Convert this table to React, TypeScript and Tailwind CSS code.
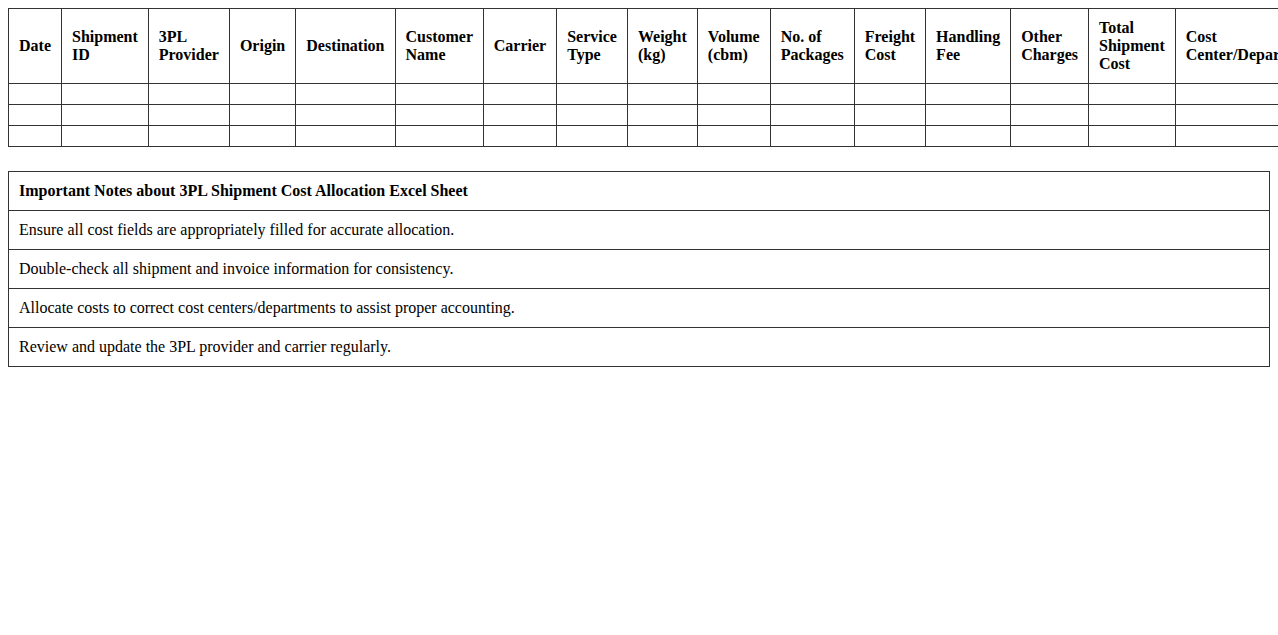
import React from 'react';

const columns = [
  'Date',
  'Shipment ID',
  '3PL Provider',
  'Origin',
  'Destination',
  'Customer Name',
  'Carrier',
  'Service Type',
  'Weight (kg)',
  'Volume (cbm)',
  'No. of Packages',
  'Freight Cost',
  'Handling Fee',
  'Other Charges',
  'Total Shipment Cost',
  'Cost Center/Department',
  'Invoice Number',
  'Remarks',
];

const notes = [
  'Ensure all cost fields are appropriately filled for accurate allocation.',
  'Double-check all shipment and invoice information for consistency.',
  'Allocate costs to correct cost centers/departments to assist proper accounting.',
  'Review and update the 3PL provider and carrier regularly.',
];

const cell = 'border border-[#333] p-[10px] text-left align-middle';

export default function App() {
  return (
    <div className="min-h-screen bg-white p-2 text-black text-[16px] leading-[18px] font-['Liberation_Serif','Times_New_Roman',serif]">
      {/* Cost allocation sheet */}
      <table className="w-full border-collapse">
        <thead>
          <tr>
            {columns.map((col) => (
              <th key={col} className={`${cell} font-bold`}>
                {col}
              </th>
            ))}
          </tr>
        </thead>
        <tbody>
          {[0, 1, 2].map((row) => (
            <tr key={row}>
              {columns.map((col) => (
                <td key={col} className={`${cell} h-[21px]`}></td>
              ))}
            </tr>
          ))}
        </tbody>
      </table>

      {/* Notes */}
      <table className="mt-6 w-full border-collapse">
        <thead>
          <tr>
            <th className={`${cell} font-bold`}>
              Important Notes about 3PL Shipment Cost Allocation Excel Sheet
            </th>
          </tr>
        </thead>
        <tbody>
          {notes.map((note) => (
            <tr key={note}>
              <td className={cell}>{note}</td>
            </tr>
          ))}
        </tbody>
      </table>
    </div>
  );
}
